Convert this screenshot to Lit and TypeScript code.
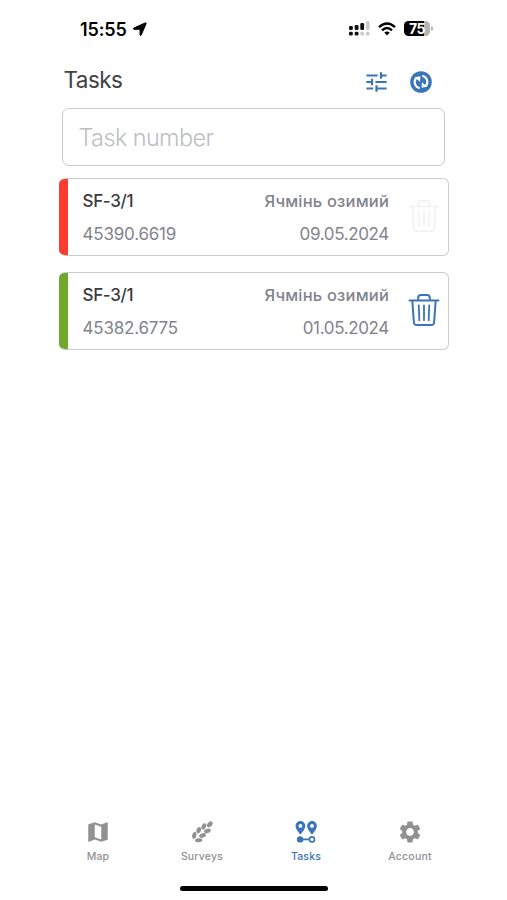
import { LitElement, html, css, svg } from "lit";
import { customElement, property } from "lit/decorators.js";

const mapIcon = html`<svg width="26" height="26" viewBox="0 0 24 24" fill="currentColor">
  <path d="M20.5 3l-.16.03L15 5.1 9 3 3.36 4.9c-.21.07-.36.25-.36.48V20.5c0 .28.22.5.5.5l.16-.03L9 18.9l6 2.1 5.64-1.9c.21-.07.36-.25.36-.48V3.5c0-.28-.22-.5-.5-.5zM15 19l-6-2.110V5l6 2.110V19z"/></svg>`;

const leaves = [
  [19.200, 4.900, 3.100, 2.100, -45],
  [13.700, 6.900, 3, 2, -66],
  [9, 10.300, 3, 2, -68],
  [4.900, 15.100, 3.200, 1.950, -80],
  [17, 11, 3.200, 1.950, -18],
  [12.500, 15.200, 3.200, 2, -18],
  [9, 19.600, 3.400, 1.800, -3],
];
const wheatIcon = html`<svg width="26" height="26" viewBox="0 0 24 24" fill="currentColor">
  ${leaves.map(([x, y, a, b, r]) => svg`<ellipse cx=${x} cy=${y} rx=${a} ry=${b} transform=${`rotate(${r} ${x} ${y})`}/>`)}</svg>`;

const routeIcon = html`<svg width="26" height="26" viewBox="0 0 26 26" fill="currentColor">
  <path fill-rule="evenodd" d="M7.400 2A4.900 4.900 0 0 0 2.500 6.900C2.500 10.200 7.400 15.600 7.400 15.600S12.300 10.200 12.300 6.900A4.900 4.900 0 0 0 7.400 2zM7.400 5a1.900 1.900 0 1 1 0 3.800a1.900 1.900 0 0 1 0-3.800z"/>
  <path fill-rule="evenodd" d="M19 2A4.900 4.900 0 0 0 14.100 6.900C14.100 10.200 19 15.600 19 15.600S23.900 10.200 23.900 6.900A4.900 4.900 0 0 0 19 2zM19 5a1.900 1.900 0 1 1 0 3.800a1.900 1.900 0 0 1 0-3.800z"/>
  <circle cx="7.100" cy="20.400" r="3.200"/><path d="M7 20.400h9.500" stroke="currentColor" stroke-width="1.800"/>
  <circle cx="19" cy="20.400" r="2.500" fill="none" stroke="currentColor" stroke-width="1.600"/></svg>`;

const gearIcon = html`<svg width="26" height="26" viewBox="0 0 24 24" fill="currentColor">
  <path d="M19.140 12.940c.04-.3.06-.61.06-.94 0-.32-.02-.64-.07-.94l2.030-1.580c.18-.14.23-.41.12-.61l-1.920-3.320c-.12-.22-.37-.29-.59-.22l-2.390.96c-.5-.38-1.030-.7-1.620-.94l-.36-2.540c-.04-.24-.24-.41-.48-.41h-3.840c-.24 0-.43.17-.47.41l-.36 2.540c-.59.24-1.130.57-1.620.94l-2.390-.96c-.22-.08-.47 0-.59.22L2.740 8.870c-.12.21-.08.47.12.61l2.030 1.580c-.05.3-.09.63-.09.94s.02.64.07.94l-2.030 1.580c-.18.14-.23.41-.12.61l1.920 3.320c.12.22.37.29.59.22l2.390-.96c.5.38 1.030.7 1.620.94l.36 2.540c.05.24.24.41.48.41h3.840c.24 0 .44-.17.47-.41l.36-2.540c.59-.24 1.130-.56 1.620-.94l2.390.96c.22.08.47 0 .59-.22l1.920-3.320c.12-.22.07-.47-.12-.61l-2.010-1.580zM12 15.600c-1.980 0-3.600-1.620-3.600-3.600s1.620-3.600 3.600-3.600 3.600 1.620 3.600 3.600-1.620 3.600-3.600 3.600z"/></svg>`;

const trashIcon = html`<svg width="32" height="34" viewBox="0 0 32 34" fill="none" stroke="currentColor" stroke-width="2" stroke-linecap="round" stroke-linejoin="round">
  <path d="M1.500 7.500H30.500M4.300 7.500L5.900 29.500Q6.100 32 8.500 32H23.500Q25.900 32 26.100 29.500L27.700 7.500M10.200 7.300V4.800Q10.200 2 13 2H19Q21.800 2 21.800 4.800V7.300"/>
  <path stroke-width="1.800" d="M10.800 12.300L11.300 27.200M16 12.300V27.200M21.200 12.300L20.700 27.200"/></svg>`;

@customElement("task-card")
export class TaskCard extends LitElement {
  @property() name = "";
  @property() number = "";
  @property() crop = "";
  @property() date = "";
  @property() tone = "open";
  static styles = css`
    :host { display: block; }
    .card { box-sizing: border-box; height: 78px; display: flex; border: 1px solid #ccccce; border-left: 0; border-radius: 6px; overflow: hidden; background: #fff; font-size: 17px; color: #83838d; }
    .stripe { width: 9px; flex: none; margin: -1px 0; }
    .open .stripe { background: #ff3b30; }
    .done .stripe { background: #70a82d; }
    .body { flex: 1; display: grid; grid-template-columns: auto auto; justify-content: space-between; grid-template-rows: 33px 33px; padding: 5.500px 0 0 14.500px; line-height: 33px; white-space: nowrap; }
    .name { color: #3b3b40; font-weight: 500; letter-spacing: -0.35px; }
    .number { letter-spacing: -0.2px; }
    .crop { text-align: right; font-size: 16.500px; font-weight: 450; letter-spacing: 0.18px; }
    .date { text-align: right; letter-spacing: -0.35px; }
    .action { width: 59px; flex: none; display: flex; align-items: center; justify-content: center; padding: 0 0 2px 10px; box-sizing: border-box; color: #3a75b8; }
    .open .action { color: #f3f3f3; }
  `;
  render() {
    return html`<div class="card ${this.tone}">
      <div class="stripe"></div>
      <div class="body">
        <span class="name">${this.name}</span><span class="crop">${this.crop}</span>
        <span class="number">${this.number}</span><span class="date">${this.date}</span>
      </div>
      <div class="action">${trashIcon}</div>
    </div>`;
  }
}

@customElement("app-root")
export class AppRoot extends LitElement {
  static styles = css`
    :host { display: flex; flex-direction: column; box-sizing: border-box; width: 507px; height: 900px; background: #fff; font-family: Inter, "Noto Sans", sans-serif; overflow: hidden; }
    svg { display: block; flex: none; }
    .status { height: 58px; box-sizing: border-box; display: flex; align-items: center; padding: 0 74px 0 80px; color: #000; }
    .time { font-size: 18px; font-weight: 600; letter-spacing: -0.15px; width: 52px; white-space: nowrap; }
    .signals { margin-left: auto; display: flex; align-items: center; gap: 8px; padding-bottom: 1px; }
    .battery { display: flex; align-items: center; gap: 1px; }
    .cell { width: 26px; height: 15px; border-radius: 4.5px; background: linear-gradient(90deg, #000 78%, #b4b4b4 78%); color: #fff; font-size: 14px; line-height: 15px; font-weight: 700; text-align: center; letter-spacing: -0.6px; }
    .cap { width: 2px; height: 5px; border-radius: 0 2px 2px 0; background: #bbb; }
    .head { height: 50px; box-sizing: border-box; display: flex; align-items: center; padding: 0 74px 2px 63.500px; }
    .title { font-size: 22.500px; font-weight: 400; color: #424246; letter-spacing: -0.55px; flex: 1; line-height: 30px; padding-bottom: 4px; }
    .tools { display: flex; align-items: center; gap: 19px; color: #3a75b8; }
    .search { box-sizing: border-box; height: 58px; margin: 0 62px 12px; border: 1px solid #c9c9cb; border-radius: 7px; padding-left: 15.500px; line-height: 58px; font-size: 23.500px; font-weight: 300; letter-spacing: -0.62px; color: #bebec1; }
    .list { display: flex; flex-direction: column; gap: 16px; margin: 0 58px 0 59px; flex: 1; }
    .tabs { display: grid; grid-template-columns: repeat(4, 104px); justify-content: center; height: 67px; }
    .tab { display: flex; flex-direction: column; align-items: center; gap: 5px; color: #919191; font-size: 10.500px; font-weight: 500; line-height: 14px; letter-spacing: 0.2px; padding-left: 1px; }
    .tab.active { color: #3a75b8; }
    .home { width: 148px; height: 5px; border-radius: 3px; background: #000; margin: 0 auto 9px; }
  `;
  private tab(icon: unknown, label: string, active = false) {
    return html`<div class="tab ${active ? "active" : ""}">${icon}<span>${label}</span></div>`;
  }
  render() {
    return html`
      <div class="status">
        <span class="time">15:55</span>
        <svg width="15" height="15" viewBox="0 0 15 15"><path stroke="#000" stroke-width="1" stroke-linejoin="round" d="M13.300.900Q14.400.700 14.100 1.700L9.200 13Q8.500 14.200 8 13V7.300H2Q.700 6.800 1.700 6.100Z"/></svg>
        <div class="signals">
          <svg width="22" height="15" viewBox="0 0 22 15">
            <g fill="#111"><rect x="1" y="5" width="3.800" height="4" rx="1.200"/><rect x="6.700" y="4" width="3.800" height="5" rx="1.200"/><rect x="12.300" y="2" width="3.800" height="7" rx="1.200"/><rect x="1" y="10.800" width="3.800" height="3.600" rx="1.200"/><rect x="6.700" y="10.800" width="3.800" height="3.600" rx="1.200"/></g>
            <g fill="#ccc"><rect x="18" y="0" width="3.600" height="9" rx="1.200"/><rect x="12.300" y="10.800" width="3.800" height="3.600" rx="1.200"/><rect x="18" y="10.800" width="3.600" height="3.600" rx="1.200"/></g>
          </svg>
          <svg width="18" height="14" viewBox="0 0 18 14" fill="none" stroke="#000" stroke-width="2.400"><path d="M1 5.200Q9-2.200 17 5.200M4 8.400Q9 3.800 14 8.400"/><path d="M6.300 10.500Q9 8.300 11.700 10.500L9 13.400Z" fill="#000" stroke="none"/></svg>
          <div class="battery"><div class="cell">75</div><div class="cap"></div></div>
        </div>
      </div>
      <div class="head">
        <div class="title">Tasks</div>
        <div class="tools">
          <svg width="27" height="26" viewBox="0 0 24 24" preserveAspectRatio="none" fill="currentColor"><path d="M3 17v2h6v-2H3zM3 5v2h10V5H3zm10 16v-2h8v-2h-8v-2h-2v6h2zM7 9v2H3v2h4v2h2V9H7zm14 4v-2H11v2h10zm-6-4h2V7h4V5h-4V3h-2v6z"/></svg>
          <svg width="24" height="24" viewBox="0 0 24 24"><circle cx="12" cy="12" r="10.800" fill="currentColor"/>
            <g fill="none" stroke="#fff" stroke-width="2.100"><path d="M13.300 5.700A6.300 6.300 0 0 1 16.600 16.200"/><path d="M10.700 18.300A6.300 6.300 0 0 1 7.400 7.800"/></g>
            <path fill="#fff" d="M5.700 7.300L11.400 6.300L11 11.800ZM18.300 16.700L12.600 17.700L13 12.200Z"/></svg>
        </div>
      </div>
      <div class="search">Task number</div>
      <div class="list">
        <task-card name="SF-3/1" number="45390.6619" crop="Ячмінь озимий" date="09.05.2024" tone="open"></task-card>
        <task-card name="SF-3/1" number="45382.6775" crop="Ячмінь озимий" date="01.05.2024" tone="done"></task-card>
      </div>
      <div class="tabs">
        ${this.tab(mapIcon, "Map")}${this.tab(wheatIcon, "Surveys")}${this.tab(routeIcon, "Tasks", true)}${this.tab(gearIcon, "Account")}
      </div>
      <div class="home"></div>`;
  }
}
